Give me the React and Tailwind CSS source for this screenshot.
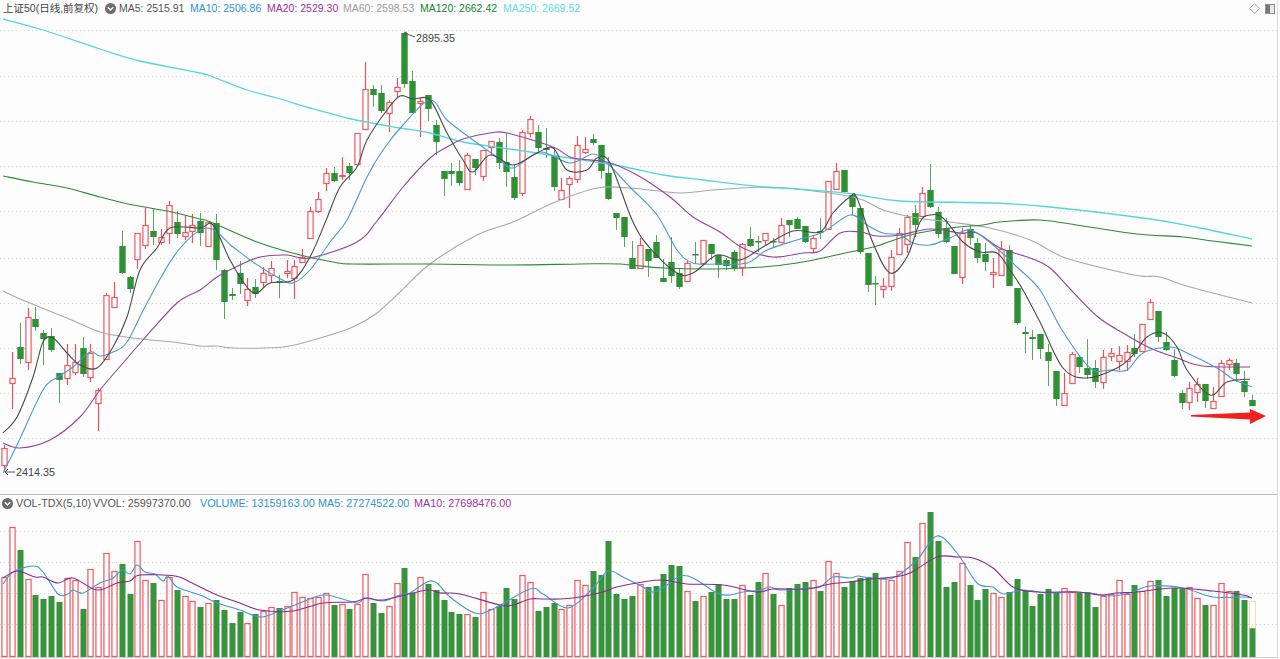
import React from "react";

// candle: [red?, bodyTop, bodyBottom, high, low]
const CANDLES = [
  [1,448,465,445,472],[1,378,383,352,409],[0,347,359,323,364],[1,317,362,308,370],[0,319,327,307,331],
  [0,333,339,330,365],[0,336,350,328,352],[0,373,380,373,403],[1,365,378,344,385],[1,362,372,344,375],
  [0,348,374,337,377],[1,353,377,344,382],[1,390,403,388,431],[1,295,359,293,359],[1,297,307,282,308],
  [0,246,273,231,274],[0,277,289,276,293],[1,233,259,233,269],[1,225,245,208,249],[0,231,237,208,245],
  [1,237,242,229,245],[1,205,233,201,244],[0,222,234,211,238],[1,232,236,216,240],[1,225,231,214,243],
  [0,221,233,213,246],[1,222,246,222,246],[0,223,260,214,270],[0,270,302,269,319],[0,294,296,288,300],
  [0,273,284,261,294],[1,289,300,278,306],[0,287,294,279,298],[1,273,282,267,288],[1,268,275,261,283],
  [0,281,282,275,298],[1,271,273,260,278],[1,266,278,260,299],[1,257,262,249,263],[1,211,238,207,238],
  [1,199,211,192,213],[1,173,183,168,191],[0,173,181,167,182],[1,175,176,157,180],[0,166,173,163,180],
  [1,133,164,133,164],[1,89,129,62,129],[0,89,95,85,107],[0,93,111,85,113],[1,102,113,100,132],
  [1,87,91,78,98],[0,33,84,33,88],[0,81,113,71,113],[1,101,103,98,137],[0,95,109,95,121],
  [0,125,142,120,155],[0,171,179,171,196],[0,171,174,163,186],[0,171,183,160,186],[1,155,189,153,189],
  [0,159,168,159,175],[1,150,176,150,181],[1,141,147,141,155],[0,142,163,138,169],[0,162,172,133,187],
  [0,177,198,165,200],[1,132,193,130,196],[1,119,133,116,137],[0,132,148,125,152],[0,148,150,128,158],
  [0,156,187,147,191],[1,190,199,178,200],[1,178,184,176,208],[1,145,179,136,183],[1,149,152,137,154],
  [0,139,143,134,145],[0,145,171,145,179],[0,173,199,157,200],[0,213,218,213,230],[0,217,237,217,247],
  [0,258,269,241,269],[1,245,268,238,268],[0,249,261,249,277],[0,242,258,235,258],[0,278,282,259,282],
  [0,262,276,237,283],[0,273,287,268,289],[1,263,281,261,282],[0,254,255,242,263],[1,240,263,240,263],
  [0,244,254,244,260],[0,255,265,255,278],[0,260,266,258,270],[0,252,268,250,271],[1,244,267,243,276],
  [0,239,246,227,247],[0,241,242,236,252],[1,233,240,233,246],[0,241,242,238,248],[1,225,242,218,243],
  [0,220,225,220,237],[0,219,229,217,229],[0,226,242,226,243],[1,238,248,235,252],[0,231,232,218,239],
  [1,181,229,181,229],[1,171,189,163,190],[0,170,192,170,192],[0,195,207,193,215],[0,208,252,208,254],
  [0,253,285,253,292],[0,283,284,276,305],[1,286,289,278,298],[1,257,286,250,291],[1,233,254,228,255],
  [1,217,244,215,253],[0,213,225,205,237],[1,193,216,187,217],[0,190,207,164,208],[0,212,234,207,238],
  [0,228,242,218,243],[0,246,274,246,274],[1,233,277,228,284],[0,229,238,225,245],[0,243,258,238,263],
  [0,254,262,243,271],[1,272,274,258,288],[1,249,275,241,276],[0,250,286,245,286],[0,288,323,288,325],
  [0,332,334,327,353],[0,337,339,330,360],[0,334,349,334,359],[0,352,361,344,386],[0,371,399,371,406],
  [1,393,405,373,405],[1,354,383,352,383],[0,357,367,355,373],[0,368,375,339,379],[0,368,382,360,388],
  [1,357,382,350,389],[1,353,356,348,361],[1,355,361,346,370],[1,352,361,345,371],[0,348,354,334,357],
  [1,324,351,324,351],[1,302,319,299,319],[0,311,337,311,342],[0,342,350,332,351],[0,360,376,349,377],
  [0,393,403,390,409],[1,388,402,382,410],[1,384,392,378,402],[0,384,401,384,408],[1,401,408,387,408],
  [1,363,396,360,396],[1,360,364,358,370],[0,363,374,359,382],[0,381,392,371,397],[0,400,406,395,406],
];

// volume bar: [red?, top]
const VOLUME = [
  [1,577],[1,527],[0,550],[1,579],[0,595],[0,599],[0,596],[0,602],[1,578],[1,580],
  [0,609],[1,569],[1,587],[1,553],[1,571],[0,564],[0,594],[1,541],[1,580],[0,583],
  [1,600],[1,577],[0,590],[1,596],[1,601],[0,607],[1,603],[0,600],[0,610],[0,623],
  [0,612],[1,623],[0,614],[1,611],[1,607],[0,608],[1,606],[1,592],[1,597],[1,598],
  [1,597],[1,593],[0,605],[1,604],[0,609],[1,604],[1,574],[0,603],[0,613],[1,606],
  [1,583],[0,568],[0,593],[1,577],[0,584],[0,590],[0,600],[0,612],[0,614],[1,614],
  [0,617],[1,592],[1,609],[0,606],[0,588],[0,599],[1,575],[1,582],[0,611],[0,607],
  [0,603],[1,609],[1,605],[1,580],[1,585],[0,571],[0,575],[0,541],[0,594],[0,599],
  [0,596],[1,584],[0,587],[0,586],[0,574],[0,565],[0,566],[1,591],[0,601],[1,596],
  [0,592],[0,584],[0,599],[0,599],[1,585],[0,595],[0,582],[1,573],[0,594],[1,605],
  [0,588],[0,584],[0,582],[1,580],[0,591],[1,561],[1,573],[0,587],[0,581],[0,578],
  [0,577],[0,573],[1,578],[1,580],[1,571],[1,542],[0,557],[1,523],[0,512],[0,541],
  [0,587],[0,582],[1,563],[0,585],[0,600],[0,589],[1,593],[1,597],[0,592],[0,579],
  [0,590],[0,606],[0,594],[0,589],[0,592],[1,588],[1,592],[0,593],[0,592],[0,607],
  [1,596],[1,594],[1,580],[1,594],[0,585],[1,591],[1,581],[0,580],[0,596],[0,588],
  [0,589],[1,587],[1,598],[0,605],[1,605],[1,583],[1,591],[0,591],[0,600],[0,628],
];

const MA250 = [[3,19],[43,30],[100,49],[140,61],[200,73],[213,77],[247,90],[277,98],[310,108],[347,118],[377,124],[400,128],[430,133],[463,142],[510,149],[563,157],[620,166],[663,175],[703,180],[763,187],[797,189],[853,194],[900,201],[993,203],[1050,207],[1150,219],[1200,228],[1252,239]];
const MA120 = [[3,176],[33,182],[67,188],[100,197],[133,205],[167,211],[200,219],[213,223],[257,242],[300,255],[333,262],[353,264],[430,264],[510,265],[580,264],[620,264],[663,268],[717,269],[763,267],[797,263],[823,258],[850,252],[877,246],[910,235],[950,228],[983,225],[1000,222],[1040,220],[1083,226],[1137,234],[1183,237],[1213,241],[1252,246]];
const MA60 = [[3,291],[20,299],[67,318],[100,332],[133,338],[173,342],[200,346],[217,346],[233,348],[283,347],[320,338],[353,327],[377,313],[400,292],[430,264],[477,235],[513,222],[553,203],[597,188],[630,188],[680,193],[713,190],[763,187],[797,189],[857,198],[883,210],[917,218],[950,222],[990,228],[1030,240],[1063,257],[1103,268],[1140,276],[1160,277],[1190,287],[1252,303]];
const MA20 = [[3,443],[20,448],[50,440],[80,417],[100,390],[123,363],[143,340],[177,303],[200,290],[217,277],[240,265],[260,257],[287,255],[310,258],[357,242],[377,221],[403,187],[430,158],[447,147],[463,139],[490,133],[507,133],[553,147],[573,158],[607,162],[637,175],[670,197],[693,217],[720,232],[743,248],[773,257],[803,253],[820,251],[840,233],[860,232],[877,236],[900,235],[930,229],[960,233],[977,233],[1000,248],[1030,258],[1050,268],[1072,291],[1098,317],[1123,333],[1150,348],[1177,358],[1203,366],[1250,367]];
const MA10 = [[3,473],[17,445],[43,390],[58,377],[73,367],[90,352],[100,356],[113,352],[127,342],[147,303],[177,252],[207,228],[233,247],[253,262],[277,277],[293,283],[310,270],[330,242],[347,220],[367,177],[383,150],[403,125],[430,100],[447,120],[473,140],[497,157],[513,168],[540,152],[570,163],[593,154],[607,163],[630,187],[657,215],[677,250],[693,263],[717,264],[747,263],[767,250],[797,240],[823,232],[850,215],[867,225],[883,233],[900,235],[913,243],[930,245],[950,238],[970,230],[993,245],[1017,267],[1040,290],[1062,330],[1090,368],[1110,370],[1127,370],[1143,353],[1170,347],[1187,353],[1217,368],[1233,379],[1252,387]];
const MA5 = [[3,433],[17,417],[33,377],[43,342],[53,338],[67,353],[80,365],[97,368],[113,347],[127,317],[140,270],[157,248],[170,228],[200,228],[213,225],[230,260],[247,287],[257,293],[270,283],[293,280],[310,257],[327,218],[340,187],[357,167],[367,140],[387,110],[400,96],[413,99],[430,100],[447,133],[463,160],[473,172],[490,155],[513,165],[537,153],[553,148],[567,170],[587,170],[597,158],[610,163],[633,222],[650,248],[677,273],[693,273],[717,255],[740,260],[763,247],[793,231],[820,232],[833,213],[850,197],[857,198],[873,243],[890,273],[907,257],[920,222],[930,215],[943,218],[963,242],[980,252],[997,253],[1010,270],[1023,290],[1040,322],[1063,368],[1087,378],[1117,368],[1133,355],[1147,337],[1163,333],[1177,347],[1187,370],[1210,395],[1227,382],[1250,379]];

const VOL_MA5 = [[3,584],[13,572],[33,566],[43,572],[58,594],[68,594],[73,590],[83,593],[100,583],[113,578],[122,570],[130,574],[137,565],[145,572],[155,574],[163,581],[168,576],[177,587],[200,595],[217,603],[240,610],[260,617],[277,612],[300,603],[325,595],[357,603],[364,598],[383,601],[400,595],[410,593],[427,582],[437,583],[450,597],[475,613],[493,609],[530,589],[543,594],[568,608],[593,588],[608,571],[623,577],[643,587],[653,592],[667,585],[680,576],[693,578],[717,593],[730,595],[743,592],[760,590],[770,587],[780,590],[807,588],[820,587],[833,577],[850,578],[858,576],[870,578],[893,578],[917,560],[937,536],[957,553],[977,583],[993,587],[1003,594],[1023,590],[1047,593],[1067,592],[1090,593],[1110,596],[1130,593],[1150,586],[1183,588],[1213,597],[1243,597],[1252,598]];
const VOL_MA10 = [[3,578],[17,571],[35,577],[43,577],[58,583],[73,578],[97,590],[117,583],[130,581],[140,575],[175,576],[190,582],[217,595],[237,602],[260,610],[293,611],[323,603],[353,602],[367,598],[383,600],[417,592],[430,590],[440,593],[460,594],[500,605],[513,605],[530,599],[543,599],[560,599],[580,597],[603,592],[617,587],[643,582],[663,580],[687,584],[723,585],[757,592],[773,589],[807,589],[830,584],[850,582],[870,579],[893,577],[910,573],[937,557],[957,557],[973,558],[993,568],[1013,587],[1037,592],[1077,592],[1100,595],[1117,593],[1137,592],[1173,588],[1213,591],[1243,595],[1252,598]];

const PRICE_GRID = [30, 76, 121, 166, 211, 258, 303, 348, 393, 438];
const VOL_GRID = [531, 562, 593, 624];

const barX = (i) => Math.round(4 + 7.85 * i);

// catmull-rom through the points, the MA lines aren't straight segments
const smooth = (pts) => {
  let d = `M${pts[0][0]} ${pts[0][1]}`;
  for (let i = 0; i < pts.length - 1; i++) {
    const p0 = pts[i - 1] || pts[i];
    const p1 = pts[i];
    const p2 = pts[i + 1];
    const p3 = pts[i + 2] || p2;
    const c1x = p1[0] + (p2[0] - p0[0]) / 6;
    const c1y = p1[1] + (p2[1] - p0[1]) / 6;
    const c2x = p2[0] - (p3[0] - p1[0]) / 6;
    const c2y = p2[1] - (p3[1] - p1[1]) / 6;
    d += ` C${c1x.toFixed(1)} ${c1y.toFixed(1)} ${c2x.toFixed(1)} ${c2y.toFixed(1)} ${p2[0]} ${p2[1]}`;
  }
  return d;
};

const MaLine = ({ pts, color, width = 1.1 }) => (
  <path d={smooth(pts)} fill="none" stroke={color} strokeWidth={width} strokeLinejoin="round" />
);

const Grid = ({ rows }) =>
  rows.map((y) => (
    <line key={y} x1="0" x2="1277" y1={y + 0.5} y2={y + 0.5} stroke="#d4d4d4" strokeDasharray="1 3" />
  ));

const ToggleDot = () => (
  <svg width="11" height="11" viewBox="0 0 11 11" className="shrink-0">
    <circle cx="5.5" cy="5.5" r="5.5" fill="#6b6b6b" />
    <path d="M2.8 4.2 5.5 7l2.7-2.8" fill="none" stroke="#fff" strokeWidth="1.3" />
  </svg>
);

const Candle = ({ c, i }) => {
  const [red, top, bottom, high, low] = c;
  const x = barX(i);
  if (red) {
    return (
      <g>
        <line x1={x + 0.5} x2={x + 0.5} y1={high} y2={low} stroke="#f0505a" strokeWidth="1.2" />
        <rect x={x - 2.1} y={top + 0.5} width="5.2" height={bottom - top} fill="#fff" stroke="#f0585f" strokeWidth="1.2" />
      </g>
    );
  }
  return (
    <g>
      <line x1={x + 0.5} x2={x + 0.5} y1={high} y2={low} stroke="#5aa65e" />
      <rect x={x - 2.7} y={top} width="6.4" height={Math.max(bottom - top, 1.5)} fill="#2f9135" />
    </g>
  );
};

const VolBar = ({ v, i }) => {
  const [red, top] = v;
  const x = barX(i);
  return red ? (
    <rect x={x - 2.1} y={top + 0.5} width="5.2" height={656 - top} fill="none" stroke="#f2595f" strokeWidth="1.2" />
  ) : (
    <rect x={x - 2.5} y={top} width="6" height={657 - top} fill="#38943c" />
  );
};

export default function App() {
  return (
    <div className="w-[1280px] h-[659px] bg-[#fdfdfd] overflow-hidden font-['Liberation_Sans','Noto_Sans_CJK_SC',sans-serif] text-[10.5px]">
      <div className="w-[1278px] h-full flex flex-col border-r border-[#dcdcdc]">
        {/* price panel */}
        <div className="h-[495px] flex flex-col border-b border-[#bdbdbd]">
          <div className="h-[17px] flex items-center pl-[3px] pr-[2px] whitespace-nowrap">
            <span className="w-[102px] text-[10.5px] text-[#444]">上证50(日线,前复权)</span>
            <ToggleDot />
            <span className="ml-[3px] w-[71px] text-[#555]">MA5: 2515.91</span>
            <span className="w-[77px] text-[#2f93d8]">MA10: 2506.86</span>
            <span className="w-[76px] text-[#a032a0]">MA20: 2529.30</span>
            <span className="w-[77px] text-[#9c9c9c]">MA60: 2598.53</span>
            <span className="w-[83px] text-[#12872e]">MA120: 2662.42</span>
            <span className="text-[#5cdde0]">MA250: 2669.52</span>
            <div className="ml-auto flex items-center gap-[5px]">
              <svg width="11" height="11" viewBox="0 0 11 11">
                <path d="M5.5 .7 10.3 5.5 5.5 10.3 .7 5.5Z" fill="#fff" stroke="#9a9a9a" />
              </svg>
              <svg width="10" height="10" viewBox="0 0 10 10">
                <rect x=".5" y=".5" width="9" height="9" fill="#e8e8e8" stroke="#8f8f8f" />
                <rect x="1" y="1" width="4" height="8" fill="#777" />
              </svg>
            </div>
          </div>
          <svg viewBox="0 17 1277 477" className="w-[1277px] h-[477px] block">
            <Grid rows={PRICE_GRID} />
            {CANDLES.map((c, i) => (
              <Candle key={i} c={c} i={i} />
            ))}
            <MaLine pts={MA60} color="#a8a8a8" />
            <MaLine pts={MA120} color="#2c8a38" />
            <MaLine pts={MA250} color="#52d8dc" width={1.3} />
            <MaLine pts={MA20} color="#96409c" />
            <MaLine pts={MA10} color="#4a9ad2" />
            <MaLine pts={MA5} color="#4a4a4a" />

            <path d="M404 33l11 4M404 33l3-1M404 33l2 3" fill="none" stroke="#555" />
            <text x="416" y="42" fill="#444" fontSize="10.8">2895.35</text>
            <path d="M5 472h10M5 472l3-3M5 472l3 3" fill="none" stroke="#555" />
            <text x="16" y="476" fill="#444" fontSize="10.8">2414.35</text>

            {/* red marker arrow */}
            <path d="M1191 415 1250 412.5V409L1266 416 1250 424V419.5L1191 416.5Z" fill="#f0201e" />
          </svg>
        </div>

        {/* volume panel */}
        <div className="flex-1 flex flex-col min-h-0 text-[10.8px]">
          <div className="h-[16px] flex items-center pl-[2px] whitespace-nowrap">
            <ToggleDot />
            <span className="ml-[3px] w-[77px] text-[#555]">VOL-TDX(5,10)</span>
            <span className="w-[107px] text-[#555]">VVOL: 25997370.00</span>
            <span className="w-[118px] text-[#2f93d8]">VOLUME: 13159163.00</span>
            <span className="w-[96px] text-[#2f93d8]">MA5: 27274522.00</span>
            <span className="text-[#a032a0]">MA10: 27698476.00</span>
          </div>
          <svg viewBox="0 511 1277 148" className="w-[1277px] h-[148px] block">
            <Grid rows={VOL_GRID} />
            {VOLUME.map((v, i) => (
              <VolBar key={i} v={v} i={i} />
            ))}
            <rect x="1249.5" y="601.5" width="6" height="27" fill="none" stroke="#d8c25e" strokeDasharray="1 1" />
            <MaLine pts={VOL_MA5} color="#3f9ad6" />
            <MaLine pts={VOL_MA10} color="#8a2a8e" />
            <line x1="0" x2="1277" y1="657.5" y2="657.5" stroke="#cfcfcf" />
          </svg>
        </div>
      </div>
    </div>
  );
}
